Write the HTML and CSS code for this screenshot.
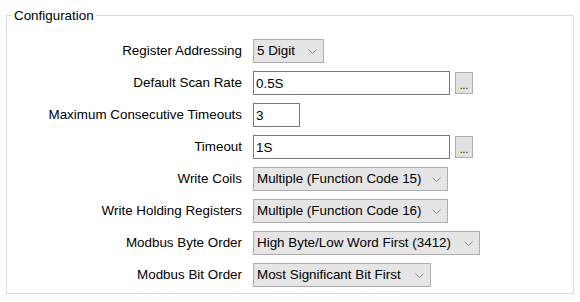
FILE: index.html
```html
<!DOCTYPE html>
<html>
<head>
<meta charset="utf-8">
<link rel="stylesheet" href="styles.css">
</head>
<body>
<fieldset class="group">
  <legend class="group-title">Configuration</legend>
  <div class="form">
    <label class="lbl">Register Addressing</label>
    <div class="field">
      <div class="combo w-71"><span class="combo-text">5 Digit</span><svg class="chev" width="9" height="5" viewBox="0 0 9 5"><path d="M0.5 0.5 L4.5 4.5 L8.5 0.5" fill="none" stroke="#888" stroke-width="1"/></svg></div>
    </div>

    <label class="lbl">Default Scan Rate</label>
    <div class="field">
      <input class="text w-197" type="text" value="0.5S">
      <button class="dots">...</button>
    </div>

    <label class="lbl">Maximum Consecutive Timeouts</label>
    <div class="field">
      <input class="text w-47" type="text" value="3">
    </div>

    <label class="lbl">Timeout</label>
    <div class="field">
      <input class="text w-197" type="text" value="1S">
      <button class="dots">...</button>
    </div>

    <label class="lbl">Write Coils</label>
    <div class="field">
      <div class="combo w-195"><span class="combo-text">Multiple (Function Code 15)</span><svg class="chev" width="9" height="5" viewBox="0 0 9 5"><path d="M0.5 0.5 L4.5 4.5 L8.5 0.5" fill="none" stroke="#888" stroke-width="1"/></svg></div>
    </div>

    <label class="lbl">Write Holding Registers</label>
    <div class="field">
      <div class="combo w-195"><span class="combo-text">Multiple (Function Code 16)</span><svg class="chev" width="9" height="5" viewBox="0 0 9 5"><path d="M0.5 0.5 L4.5 4.5 L8.5 0.5" fill="none" stroke="#888" stroke-width="1"/></svg></div>
    </div>

    <label class="lbl">Modbus Byte Order</label>
    <div class="field">
      <div class="combo w-227"><span class="combo-text">High Byte/Low Word First (3412)</span><svg class="chev" width="9" height="5" viewBox="0 0 9 5"><path d="M0.5 0.5 L4.5 4.5 L8.5 0.5" fill="none" stroke="#888" stroke-width="1"/></svg></div>
    </div>

    <label class="lbl">Modbus Bit Order</label>
    <div class="field">
      <div class="combo w-178"><span class="combo-text">Most Significant Bit First</span><svg class="chev" width="9" height="5" viewBox="0 0 9 5"><path d="M0.5 0.5 L4.5 4.5 L8.5 0.5" fill="none" stroke="#888" stroke-width="1"/></svg></div>
    </div>
  </div>
</fieldset>
</body>
</html>
```

FILE: styles.css
```css
html, body {
  margin: 0;
  padding: 0;
  background: #ffffff;
}
body {
  font-family: "Liberation Sans", Arial, sans-serif;
  font-size: 13.4px;
  color: #000;
  padding: 8px 6px 0 6px;
}
.group {
  margin: 0;
  padding: 0;
  border: 1px solid #dcdcdc;
  height: 286px;
  box-sizing: border-box;
  min-width: 0;
  width: 568px;
}
.group-title {
  margin-left: 5px;
  padding: 0 2px;
  line-height: 15px;
  font-size: 13.4px;
}
.form {
  display: grid;
  grid-template-columns: 235px auto;
  column-gap: 11px;
  row-gap: 8px;
  grid-auto-rows: 24px;
  padding-top: 16px;
  align-items: center;
}
.lbl {
  text-align: right;
  white-space: nowrap;
  line-height: 24px;
}
.field {
  display: flex;
  align-items: center;
  gap: 5px;
  height: 24px;
}
.combo {
  box-sizing: border-box;
  height: 24px;
  border: 1px solid #adadad;
  background: #e5e5e5;
  display: flex;
  align-items: center;
  justify-content: space-between;
  padding: 0 6px 0 3px;
  white-space: nowrap;
}
.combo-text {
  line-height: 22px;
}
.chev {
  display: block;
  flex: none;
}
.text {
  box-sizing: border-box;
  height: 24px;
  border: 1px solid #7a7a7a;
  background: #fff;
  padding: 0 2px;
  margin: 0;
  font-family: inherit;
  font-size: 13.4px;
  color: #000;
  outline: none;
}
.dots {
  box-sizing: border-box;
  width: 18px;
  height: 22px;
  border: 1px solid #adadad;
  background: #e1e1e1;
  padding: 0;
  margin: 0;
  font-family: inherit;
  font-size: 10px;
  color: #000;
  line-height: 22px;
  padding-top: 2px;
}
.w-71 { width: 71px; }
.w-197 { width: 197px; }
.w-47 { width: 47px; }
.w-195 { width: 195px; }
.w-227 { width: 227px; }
.w-178 { width: 178px; }
```
